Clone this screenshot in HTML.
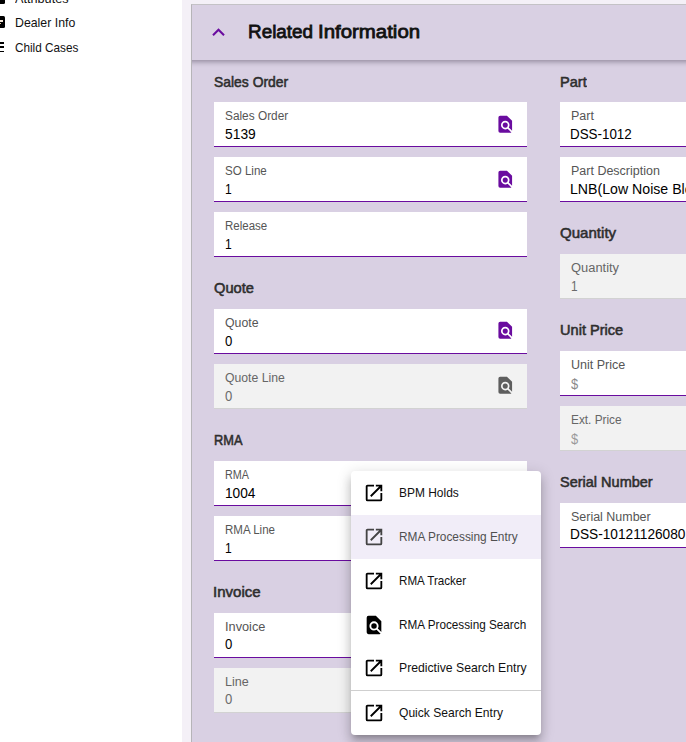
<!DOCTYPE html>
<html>
<head>
<meta charset="utf-8">
<title>Related Information</title>
<style>
html,body{margin:0;padding:0;}
body{width:686px;height:742px;overflow:hidden;position:relative;background:#f4f0f7;font-family:"Liberation Sans",sans-serif;color:#000;}
.abs{position:absolute;}
#side{left:0;top:0;width:182px;height:742px;background:#fff;}
#panel{left:191px;top:4px;width:520px;height:760px;background:#d9d0e3;border-left:1px solid #b6b4b8;border-top:1px solid #c4c2c6;box-sizing:border-box;overflow:hidden;}
#hdr{left:-10px;top:0;width:540px;height:55px;background:#d9d0e3;box-shadow:0 2px 5px rgba(30,20,40,.36);}
.t{position:absolute;white-space:nowrap;transform-origin:0 50%;line-height:20px;height:20px;}
.nav{font-size:13px;color:#111;}
.h1{font-size:19px;color:#111;-webkit-text-stroke:0.8px #111;}
.h2{font-size:14.6px;color:#2e2e2e;-webkit-text-stroke:0.55px #2e2e2e;}
.lbl{font-size:12.3px;color:#555;}
.val{font-size:14px;color:#000;}
.f{position:absolute;height:45px;box-sizing:border-box;background:#fff;border-bottom:1px solid #6a0c9f;}
.f.d{background:#f2f2f2;border-bottom:1px solid #d2d2d2;}
.ic{position:absolute;width:20.5px;height:20.5px;}
#menu{left:351px;top:471px;width:190px;height:264px;background:#fff;border-radius:4px;box-shadow:0 5px 5px -3px rgba(0,0,0,.2),0 8px 10px 1px rgba(0,0,0,.14),0 3px 14px 2px rgba(0,0,0,.12);overflow:hidden;}
.mt{font-size:13px;color:#111;}
#hl{left:0;top:44px;width:190px;height:44px;background:#f1edf8;}
#sep{left:0;top:219px;width:190px;height:1px;background:#cfcfcf;}
</style>
</head>
<body>
<div id="side" class="abs"></div>
<div id="panel" class="abs"><div id="hdr" class="abs"></div></div>
<div class="abs" style="left:-10px;top:-10px;width:14.9px;height:13.7px;border-radius:1.5px;background:#000"></div>
<div class="abs" style="left:-10px;top:15.9px;width:15px;height:11.8px;border-radius:1.5px;background:#000"></div>
<div class="abs" style="left:0;top:20.3px;width:3px;height:1.4px;background:#f3e6d8"></div>
<div class="abs" style="left:0;top:23px;width:1.3px;height:1.3px;background:#e8c9a0"></div>
<div class="abs" style="left:0;top:42.2px;width:4.4px;height:1.5px;background:#000"></div>
<div class="abs" style="left:0;top:46.4px;width:4.4px;height:1.5px;background:#000"></div>
<div class="abs" style="left:0;top:50.8px;width:4.4px;height:1.5px;background:#000"></div>
<svg class="abs" style="left:206.45px;top:19.8px;width:25px;height:25px" viewBox="0 0 24 24"><path fill="#6a0c9f" d="M7.41,15.41L12,10.83L16.59,15.41L18,14L12,8L6,14L7.41,15.41Z"/></svg>
<div class="f" style="left:214px;top:102px;width:313px"></div>
<svg class="ic" style="left:494.55px;top:114.40px" viewBox="0 0 24 24"><path fill="#6a0c9f" d="M9,13A3,3 0 0,0 12,16A3,3 0 0,0 15,13A3,3 0 0,0 12,10A3,3 0 0,0 9,13M20,19.59V8L14,2H6A2,2 0 0,0 4,4V20A2,2 0 0,0 6,22H18C18.45,22 18.85,21.85 19.19,21.6L14.76,17.17C13.96,17.69 13,18 12,18A5,5 0 0,1 7,13A5,5 0 0,1 12,8A5,5 0 0,1 17,13C17,14 16.69,14.96 16.17,15.75L20,19.59Z"/></svg>
<div class="f" style="left:214px;top:157px;width:313px"></div>
<svg class="ic" style="left:494.55px;top:169.40px" viewBox="0 0 24 24"><path fill="#6a0c9f" d="M9,13A3,3 0 0,0 12,16A3,3 0 0,0 15,13A3,3 0 0,0 12,10A3,3 0 0,0 9,13M20,19.59V8L14,2H6A2,2 0 0,0 4,4V20A2,2 0 0,0 6,22H18C18.45,22 18.85,21.85 19.19,21.6L14.76,17.17C13.96,17.69 13,18 12,18A5,5 0 0,1 7,13A5,5 0 0,1 12,8A5,5 0 0,1 17,13C17,14 16.69,14.96 16.17,15.75L20,19.59Z"/></svg>
<div class="f" style="left:214px;top:212px;width:313px"></div>
<div class="f" style="left:214px;top:309px;width:313px"></div>
<svg class="ic" style="left:494.55px;top:320.40px" viewBox="0 0 24 24"><path fill="#6a0c9f" d="M9,13A3,3 0 0,0 12,16A3,3 0 0,0 15,13A3,3 0 0,0 12,10A3,3 0 0,0 9,13M20,19.59V8L14,2H6A2,2 0 0,0 4,4V20A2,2 0 0,0 6,22H18C18.45,22 18.85,21.85 19.19,21.6L14.76,17.17C13.96,17.69 13,18 12,18A5,5 0 0,1 7,13A5,5 0 0,1 12,8A5,5 0 0,1 17,13C17,14 16.69,14.96 16.17,15.75L20,19.59Z"/></svg>
<div class="f d" style="left:214px;top:364px;width:313px"></div>
<svg class="ic" style="left:494.55px;top:375.40px" viewBox="0 0 24 24"><path fill="#5e5e5e" d="M9,13A3,3 0 0,0 12,16A3,3 0 0,0 15,13A3,3 0 0,0 12,10A3,3 0 0,0 9,13M20,19.59V8L14,2H6A2,2 0 0,0 4,4V20A2,2 0 0,0 6,22H18C18.45,22 18.85,21.85 19.19,21.6L14.76,17.17C13.96,17.69 13,18 12,18A5,5 0 0,1 7,13A5,5 0 0,1 12,8A5,5 0 0,1 17,13C17,14 16.69,14.96 16.17,15.75L20,19.59Z"/></svg>
<div class="f" style="left:214px;top:461px;width:313px"></div>
<div class="f" style="left:214px;top:516px;width:313px"></div>
<div class="f" style="left:214px;top:613px;width:313px"></div>
<div class="f d" style="left:214px;top:668px;width:313px"></div>
<div class="f" style="left:560px;top:102px;width:200px"></div>
<div class="f" style="left:560px;top:157px;width:200px"></div>
<div class="f d" style="left:560px;top:254px;width:200px"></div>
<div class="f" style="left:560px;top:351px;width:200px"></div>
<div class="f d" style="left:560px;top:406px;width:200px"></div>
<div class="f" style="left:560px;top:503px;width:200px"></div>
<div class="t nav" style="left:15.00px;top:-11.00px;transform:scaleX(0.9749);">Attributes</div>
<div class="t nav" style="left:15.00px;top:13.00px;transform:scaleX(0.9477);">Dealer Info</div>
<div class="t nav" style="left:15.00px;top:38.00px;transform:scaleX(0.9029);">Child Cases</div>
<div class="t h1" style="left:248.00px;top:22.42px;transform:scaleX(0.9935);">Related</div>
<div class="t h2" style="left:214.00px;top:71.84px;transform:scaleX(0.9526);">Sales Order</div>
<div class="t lbl" style="left:225.00px;top:105.94px;transform:scaleX(0.9633);">Sales Order</div>
<div class="t val" style="left:225.00px;top:123.85px;transform:scaleX(0.9875);">5139</div>
<div class="t lbl" style="left:225.00px;top:160.94px;transform:scaleX(0.9403);">SO Line</div>
<div class="t val" style="left:225.00px;top:178.85px;transform:scaleX(0.8629);">1</div>
<div class="t lbl" style="left:225.00px;top:215.94px;transform:scaleX(0.9350);">Release</div>
<div class="t val" style="left:225.00px;top:233.85px;transform:scaleX(0.8629);">1</div>
<div class="t h2" style="left:214.00px;top:278.04px;transform:scaleX(1.0044);">Quote</div>
<div class="t lbl" style="left:225.00px;top:312.94px;transform:scaleX(0.9991);">Quote</div>
<div class="t val" style="left:225.00px;top:330.85px;transform:scaleX(0.9406);">0</div>
<div class="t lbl" style="left:225.00px;top:367.94px;transform:scaleX(0.9933);color:#666">Quote Line</div>
<div class="t val" style="left:225.00px;top:385.85px;transform:scaleX(0.9347);color:#6b6b6b">0</div>
<div class="t h2" style="left:214.00px;top:429.84px;transform:scaleX(0.8772);">RMA</div>
<div class="t lbl" style="left:225.00px;top:464.94px;transform:scaleX(0.8778);">RMA</div>
<div class="t val" style="left:225.00px;top:482.85px;transform:scaleX(0.9787);">1004</div>
<div class="t lbl" style="left:225.00px;top:519.94px;transform:scaleX(0.9372);">RMA Line</div>
<div class="t val" style="left:225.00px;top:537.85px;transform:scaleX(0.8629);">1</div>
<div class="t h2" style="left:213.00px;top:581.84px;transform:scaleX(1.0307);">Invoice</div>
<div class="t lbl" style="left:225.00px;top:616.94px;transform:scaleX(1.0365);">Invoice</div>
<div class="t val" style="left:225.00px;top:633.95px;transform:scaleX(0.9406);">0</div>
<div class="t lbl" style="left:225.00px;top:671.94px;transform:scaleX(1.0219);color:#666">Line</div>
<div class="t val" style="left:225.00px;top:688.95px;transform:scaleX(0.9347);color:#6b6b6b">0</div>
<div class="t h2" style="left:560.00px;top:71.84px;transform:scaleX(0.9999);">Part</div>
<div class="t lbl" style="left:571.00px;top:105.94px;transform:scaleX(1.0173);">Part</div>
<div class="t val" style="left:570.00px;top:123.85px;transform:scaleX(0.9562);">DSS-1012</div>
<div class="t lbl" style="left:571.00px;top:160.94px;transform:scaleX(1.0158);">Part Description</div>
<div class="t val" style="left:570.00px;top:178.85px;transform:scaleX(1.0099);">LNB(Low Noise Block) Dish Antenna</div>
<div class="t h2" style="left:560.00px;top:223.24px;transform:scaleX(1.0321);">Quantity</div>
<div class="t lbl" style="left:571.00px;top:257.94px;transform:scaleX(1.0491);color:#666">Quantity</div>
<div class="t val" style="left:571.00px;top:275.85px;transform:scaleX(0.8457);color:#6b6b6b">1</div>
<div class="t h2" style="left:560.00px;top:319.84px;transform:scaleX(0.9994);">Unit Price</div>
<div class="t lbl" style="left:571.00px;top:354.94px;transform:scaleX(1.0182);">Unit Price</div>
<div class="t val" style="left:571.00px;top:374.05px;transform:scaleX(0.9193);color:#8a8a8a">$</div>
<div class="t lbl" style="left:571.00px;top:409.94px;transform:scaleX(0.9619);color:#666">Ext. Price</div>
<div class="t val" style="left:571.00px;top:429.05px;transform:scaleX(0.9193);color:#9a9a9a">$</div>
<div class="t h2" style="left:560.00px;top:471.84px;transform:scaleX(0.9935);">Serial Number</div>
<div class="t lbl" style="left:571.00px;top:506.94px;transform:scaleX(1.0141);">Serial Number</div>
<div class="t val" style="left:570.00px;top:523.95px;transform:scaleX(0.9779);">DSS-10121126080</div>
<div class="t h1" style="left:318.00px;top:22.42px;transform:scaleX(1.0741);">Information</div>
<div id="menu" class="abs">
<div id="hl" class="abs"></div>
<div id="sep" class="abs"></div>
<svg class="abs" style="left:11.8px;top:10.50px;width:22px;height:22px" viewBox="0 0 24 24"><path fill="#000" d="M14,3V5H17.59L7.76,14.83L9.17,16.24L19,6.41V10H21V3M19,19H5V5H12V3H5C3.89,3 3,3.9 3,5V19A2,2 0 0,0 5,21H19A2,2 0 0,0 21,19V12H19V19Z"/></svg>
<div class="t mt" style="left:48.00px;top:12.00px;transform:scaleX(0.9192);">BPM Holds</div>
<svg class="abs" style="left:11.8px;top:54.50px;width:22px;height:22px" viewBox="0 0 24 24"><path fill="#444" d="M14,3V5H17.59L7.76,14.83L9.17,16.24L19,6.41V10H21V3M19,19H5V5H12V3H5C3.89,3 3,3.9 3,5V19A2,2 0 0,0 5,21H19A2,2 0 0,0 21,19V12H19V19Z"/></svg>
<div class="t mt" style="left:48.00px;top:56.00px;transform:scaleX(0.9121);color:#505050">RMA Processing Entry</div>
<svg class="abs" style="left:11.8px;top:98.50px;width:22px;height:22px" viewBox="0 0 24 24"><path fill="#000" d="M14,3V5H17.59L7.76,14.83L9.17,16.24L19,6.41V10H21V3M19,19H5V5H12V3H5C3.89,3 3,3.9 3,5V19A2,2 0 0,0 5,21H19A2,2 0 0,0 21,19V12H19V19Z"/></svg>
<div class="t mt" style="left:48.00px;top:100.00px;transform:scaleX(0.8942);">RMA Tracker</div>
<svg class="abs" style="left:11.8px;top:142.50px;width:22px;height:22px" viewBox="0 0 24 24"><path fill="#000" d="M9,13A3,3 0 0,0 12,16A3,3 0 0,0 15,13A3,3 0 0,0 12,10A3,3 0 0,0 9,13M20,19.59V8L14,2H6A2,2 0 0,0 4,4V20A2,2 0 0,0 6,22H18C18.45,22 18.85,21.85 19.19,21.6L14.76,17.17C13.96,17.69 13,18 12,18A5,5 0 0,1 7,13A5,5 0 0,1 12,8A5,5 0 0,1 17,13C17,14 16.69,14.96 16.17,15.75L20,19.59Z"/></svg>
<div class="t mt" style="left:48.00px;top:144.00px;transform:scaleX(0.9026);">RMA Processing Search</div>
<svg class="abs" style="left:11.8px;top:185.50px;width:22px;height:22px" viewBox="0 0 24 24"><path fill="#000" d="M14,3V5H17.59L7.76,14.83L9.17,16.24L19,6.41V10H21V3M19,19H5V5H12V3H5C3.89,3 3,3.9 3,5V19A2,2 0 0,0 5,21H19A2,2 0 0,0 21,19V12H19V19Z"/></svg>
<div class="t mt" style="left:48.00px;top:187.00px;transform:scaleX(0.9392);">Predictive Search Entry</div>
<svg class="abs" style="left:11.8px;top:230.50px;width:22px;height:22px" viewBox="0 0 24 24"><path fill="#000" d="M14,3V5H17.59L7.76,14.83L9.17,16.24L19,6.41V10H21V3M19,19H5V5H12V3H5C3.89,3 3,3.9 3,5V19A2,2 0 0,0 5,21H19A2,2 0 0,0 21,19V12H19V19Z"/></svg>
<div class="t mt" style="left:48.00px;top:232.00px;transform:scaleX(0.9282);">Quick Search Entry</div>
</div>
</body>
</html>
